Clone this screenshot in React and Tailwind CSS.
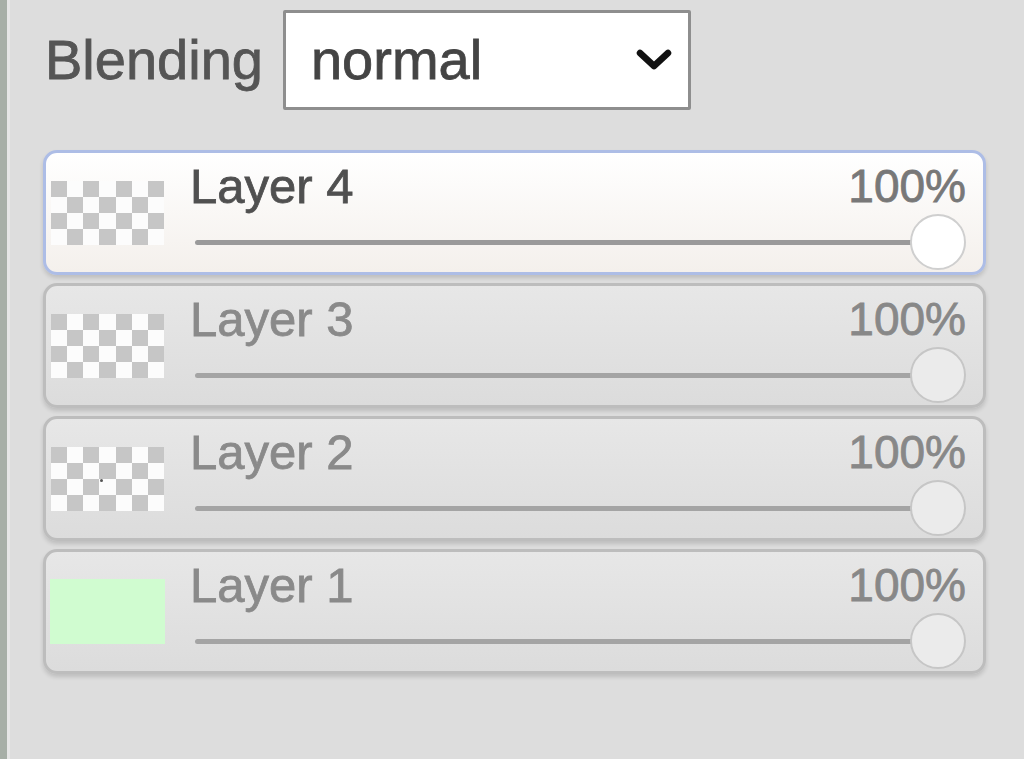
import React from 'react';

const layers = [
  { name: 'Layer 4', opacity: 100, selected: true, thumb: 'checker' },
  { name: 'Layer 3', opacity: 100, selected: false, thumb: 'checker' },
  { name: 'Layer 2', opacity: 100, selected: false, thumb: 'checker', dot: true },
  { name: 'Layer 1', opacity: 100, selected: false, thumb: 'fill' },
];

const Checker = ({ dot }) => {
  const cells = [];
  for (let r = 0; r < 4; r++) {
    for (let c = 0; c < 7; c++) {
      cells.push(
        <div key={r + '-' + c} className={(r + c) % 2 === 0 ? 'bg-[#c6c6c6]' : 'bg-[#fcfcfc]'} />
      );
    }
  }
  return (
    <div className="relative grid h-[64px] w-[113px] grid-cols-7 grid-rows-4 blur-[0.6px]">
      {cells}
      {dot && <div className="absolute left-[49px] top-[32px] h-[3px] w-[3px] rounded-full bg-[#555]" />}
    </div>
  );
};

const LayerRow = ({ layer }) => {
  const sel = layer.selected;
  return (
    <div
      className={
        'flex h-[125px] items-center rounded-[14px] border-[3px] pl-[4px] pr-[17px] shadow-[0_3px_4px_rgba(0,0,0,0.14)] ' +
        (sel
          ? 'border-[#adbde6] bg-gradient-to-b from-[#ffffff] to-[#f4f0ec]'
          : 'border-[#bdbdbd] bg-gradient-to-b from-[#e7e7e7] to-[#dcdcdc]')
      }
    >
      <div className="flex w-[115px] shrink-0 justify-center">
        {layer.thumb === 'fill' ? (
          <div className="h-[65px] w-[115px] bg-[#d0fcd0]" />
        ) : (
          <Checker dot={layer.dot} />
        )}
      </div>
      <div className="ml-[25px] flex h-full flex-1 flex-col pt-[9px]">
        <div className="flex h-[48px] items-center justify-between leading-[48px] [-webkit-text-stroke:0.8px_currentColor]">
          <span className={'text-[49px] ' + (sel ? 'text-[#505050]' : 'text-[#8a8a8a]')}>{layer.name}</span>
          <span className={'text-[46px] ' + (sel ? 'text-[#787878]' : 'text-[#888888]')}>{layer.opacity}%</span>
        </div>
        <div className="mt-[4px] flex h-[56px] items-center pl-[5px]">
          <div className={'h-[5px] flex-1 rounded-full ' + (sel ? 'bg-[#9a9a9a]' : 'bg-[#a4a4a4]')} />
          <div
            className={
              '-ml-[20px] h-[56px] w-[56px] rounded-full border-[2px] ' +
              (sel ? 'border-[#cfcfcf] bg-white' : 'border-[#c6c6c6] bg-[#ebebeb]')
            }
          />
        </div>
      </div>
    </div>
  );
};

export default function App() {
  return (
    <div className="flex h-[759px] w-[1024px] overflow-hidden bg-[#dddddd] font-['Liberation_Sans',Arial,sans-serif]">
      <div className="w-[7px] bg-[#a7afa7]" />
      <div className="w-[3px] bg-[#e6e6e6]" />
      <div className="flex-1 pl-[33px] pr-[38px] pt-[10px]">
        <div className="flex items-center gap-[20px] [-webkit-text-stroke:0.8px_currentColor]">
          <span className="pl-[2px] text-[56px] leading-[100px] text-[#555555]">Blending</span>
          <div className="flex h-[100px] w-[408px] items-center justify-between rounded-[2px] border-[3px] border-[#8e8e8e] bg-white pl-[25px] pr-[16px]">
            <span className="text-[56px] text-[#444444]">normal</span>
            <svg width="36" height="22" viewBox="0 0 36 22" fill="none">
              <path d="M4 4 L18 17 L32 4" stroke="#111" strokeWidth="6.5" strokeLinecap="round" strokeLinejoin="round" />
            </svg>
          </div>
        </div>
        <div className="mt-[40px] flex flex-col gap-[8px]">
          {layers.map((l) => (
            <LayerRow key={l.name} layer={l} />
          ))}
        </div>
      </div>
    </div>
  );
}
